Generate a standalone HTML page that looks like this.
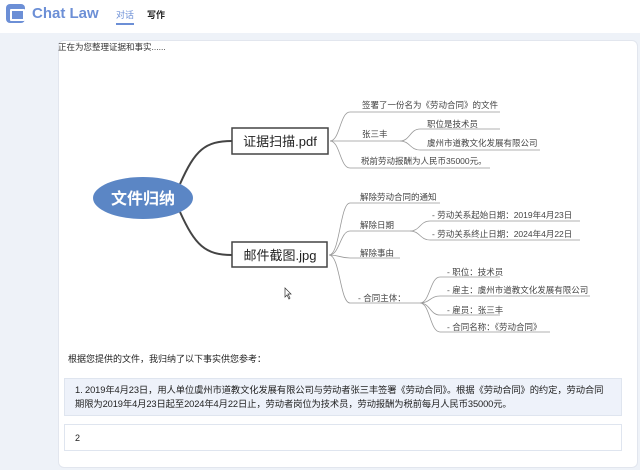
<!DOCTYPE html>
<html><head><meta charset="utf-8"><style>
*{margin:0;padding:0;box-sizing:border-box}
body{width:640px;height:470px;overflow:hidden;background:#eef2f8;font-family:"Liberation Sans","Noto Sans CJK SC",sans-serif;position:relative}
.hdr{position:absolute;left:0;top:0;width:640px;height:33px;background:#fff}
.logo{position:absolute;left:6px;top:4px;width:19px;height:19px;border-radius:4px;background:#6c8fd6}
.logo:after{content:"";position:absolute;left:4px;top:5px;width:11px;height:8px;border:2px solid #fff;border-radius:1px}
.brand{position:absolute;left:32px;top:5px;font-size:15px;font-weight:bold;color:#6c8fd6}
.nav1{position:absolute;left:116px;top:8px;font-size:9px;color:#6c8fd6;border-bottom:2px solid #6c8fd6;padding-bottom:2px}
.nav2{position:absolute;left:147px;top:8px;font-size:9px;color:#222;font-weight:bold}
.card{position:absolute;left:58px;top:40px;width:580px;height:428px;background:#fff;border:1px solid #e2e6ee;border-radius:6px}
.t0{position:absolute;left:58px;top:41px;font-size:8.5px;color:#333}
.t1{position:absolute;left:68px;top:352px;font-size:9px;color:#222}
.box1{position:absolute;left:64px;top:378px;width:558px;height:38px;background:#eef2fa;border:1px solid #dfe5ef;font-size:9.3px;color:#222;padding:4px 10px;line-height:14px;letter-spacing:-0.1px}
.box2{position:absolute;left:64px;top:424px;width:558px;height:27px;background:#fff;border:1px solid #dfe5ef;font-size:9px;color:#222;padding:8px 10px}
svg{position:absolute;left:0;top:0}
</style></head><body>
<div class="hdr"></div>
<div class="logo"></div>
<div class="brand">Chat Law</div>
<div class="nav1">对话</div>
<div class="nav2">写作</div>
<div class="card"></div>
<div class="t0">正在为您整理证据和事实......</div>
<svg width="640" height="470" font-family="Liberation Sans, Noto Sans CJK SC, sans-serif">
<g fill="none" stroke="#444" stroke-width="2">
<path d="M180 184 C195 150,205 141,232 141"/>
<path d="M180 212 C195 245,205 255,232 255"/>
</g>
<ellipse cx="143" cy="198" rx="50" ry="21" fill="#5b86c5"/>
<text x="143" y="204" font-size="16" font-weight="bold" fill="#fff" text-anchor="middle">文件归纳</text>
<rect x="232" y="128" width="96" height="26" fill="#fff" stroke="#444" stroke-width="1.5"/>
<text x="280" y="146" font-size="13" fill="#222" text-anchor="middle">证据扫描.pdf</text>
<rect x="232" y="242" width="95" height="25" fill="#fff" stroke="#444" stroke-width="1.5"/>
<text x="280" y="260" font-size="13" fill="#222" text-anchor="middle">邮件截图.jpg</text>
<g fill="none" stroke="#999" stroke-width="0.8">
<path d="M330 141 C340 141,340 112,350 112 L500 112"/>
<path d="M330 141 L400 141 C410 141,410 129,420 129 L500 129"/>
<path d="M400 141 C410 141,410 150,420 150 L540 150"/>
<path d="M330 141 C340 141,340 168,350 168 L490 168"/>
<path d="M329 255 C340 255,340 203,350 203 L440 203"/>
<path d="M329 255 C340 255,340 231,350 231 L410 231 C420 231,420 221,430 221 L580 221"/>
<path d="M410 231 C420 231,420 240,430 240 L580 240"/>
<path d="M329 255 C340 255,340 258,350 258 L400 258"/>
<path d="M329 255 C340 255,340 303,350 303 L420 303"/>
<path d="M420 303 C430 303,430 277,440 277 L500 277"/>
<path d="M420 303 C430 303,430 296,440 296 L590 296"/>
<path d="M420 303 C430 303,430 315,440 315 L500 315"/>
<path d="M420 303 C430 303,430 332,440 332 L550 332"/>
</g>
<g font-size="8.5" fill="#444">
<text x="362" y="108">签署了一份名为《劳动合同》的文件</text>
<text x="362" y="137">张三丰</text>
<text x="427" y="127">职位是技术员</text>
<text x="427" y="146">虞州市道教文化发展有限公司</text>
<text x="361" y="164">税前劳动报酬为人民币35000元。</text>
<text x="360" y="200">解除劳动合同的通知</text>
<text x="360" y="228">解除日期</text>
<text x="432" y="218">- 劳动关系起始日期：2019年4月23日</text>
<text x="432" y="237">- 劳动关系终止日期：2024年4月22日</text>
<text x="360" y="256">解除事由</text>
<text x="358" y="301">- 合同主体：</text>
<text x="447" y="275">- 职位：技术员</text>
<text x="447" y="293">- 雇主：虞州市道教文化发展有限公司</text>
<text x="447" y="313">- 雇员：张三丰</text>
<text x="447" y="330">- 合同名称：《劳动合同》</text>
</g>
<path d="M285 288 L285 297 L287 295 L289 299 L290 298 L288 294 L291 294 Z" fill="#fff" stroke="#333" stroke-width="0.7"/>
</svg>
<div class="t1">根据您提供的文件，我归纳了以下事实供您参考：</div>
<div class="box1">1. 2019年4月23日，用人单位虞州市道教文化发展有限公司与劳动者张三丰签署《劳动合同》。根据《劳动合同》的约定，劳动合同期限为2019年4月23日起至2024年4月22日止，劳动者岗位为技术员，劳动报酬为税前每月人民币35000元。</div>
<div class="box2">2</div>
</body></html>
